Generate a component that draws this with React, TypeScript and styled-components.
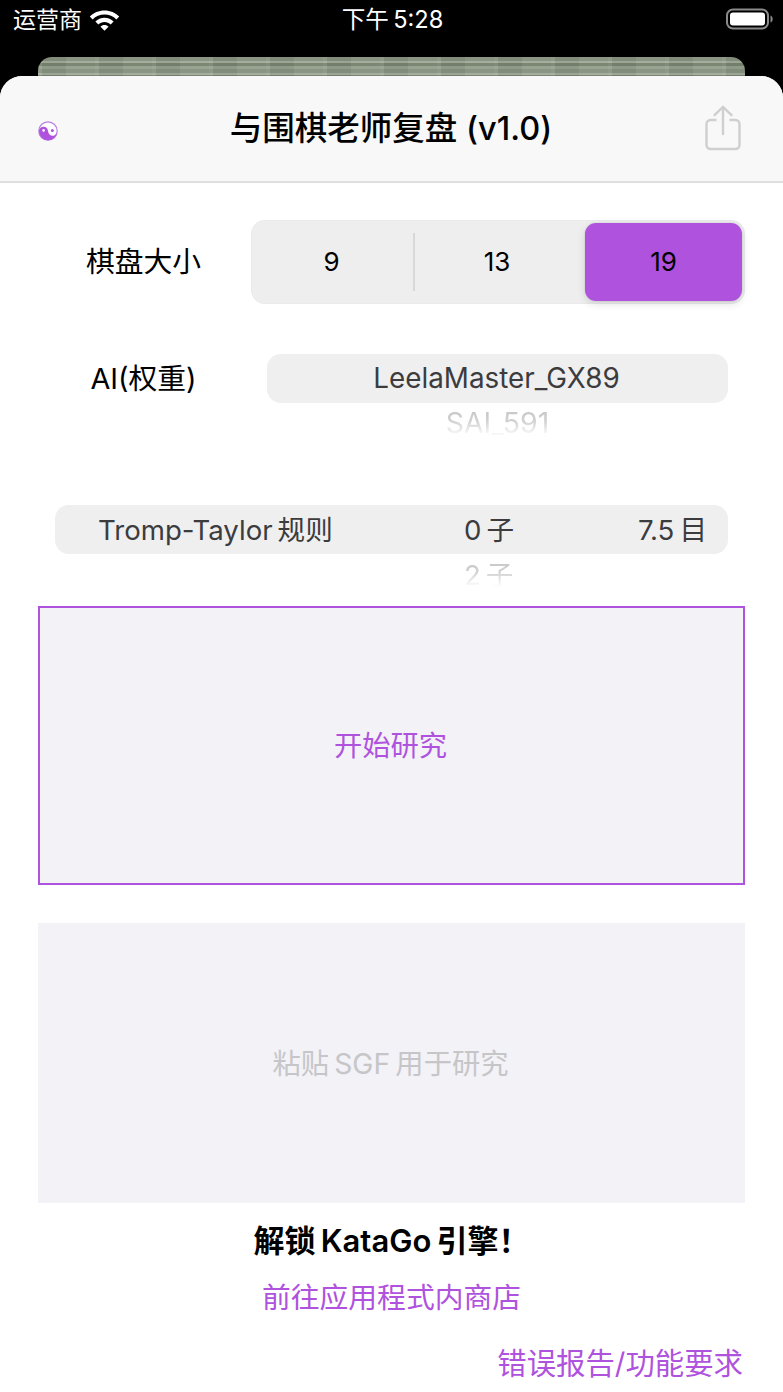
import React from "react";
import styled, { createGlobalStyle } from "styled-components";

const Global = createGlobalStyle`
  html, body { margin: 0; padding: 0; background: #000; }
  body { font-family: Inter, "Noto Sans CJK SC", sans-serif; }
  * { box-sizing: border-box; }
`;
const Screen = styled.div`
  width: 783px; height: 1392px; overflow: hidden; background: #000;
  display: flex; flex-direction: column;
`;
const StatusBar = styled.div`
  height: 57px; flex: none; display: grid; grid-template-columns: 1fr auto 1fr; align-items: start;
  padding: 7px 10px 0 13px; color: #fff; font-size: 23px; line-height: 26px; white-space: nowrap;
`;
const StatusLeft = styled.div`display: flex; align-items: center; gap: 7px;`;
const StatusTime = styled.span`font-size: 23.6px; margin-left: -1px;`;
const StatusRight = styled.div`display: flex; justify-content: flex-end; padding-top: 1px;`;
const Peek = styled.div`
  height: 19px; flex: none; margin: 0 38px; border-radius: 14px 14px 0 0;
  background:
    repeating-linear-gradient(90deg, rgba(255,255,255,.07) 0 4px, rgba(0,0,0,.04) 4px 28px, rgba(255,255,255,.03) 28px 57px),
    repeating-linear-gradient(180deg, #87927f 0 4px, #a2ab9b 4px 6px, #78836f 6px 9px, #96a08e 9px 12px);
  filter: blur(.4px);
`;
const Sheet = styled.div`
  flex: 1; background: #fff; border-radius: 22px 22px 0 0; overflow: hidden;
  display: flex; flex-direction: column; position: relative;
`;
const Header = styled.header`
  height: 107px; flex: none; background: #f8f8f8; border-bottom: 2px solid #dfdfdf;
  display: grid; grid-template-columns: 1fr auto 1fr; align-items: center; padding: 0 37px;
`;
const Title = styled.h1`
  margin: 0; font-size: 32.5px; line-height: 38px; font-weight: 500; color: #000; white-space: nowrap;
  font-family: Inter, "Noto Sans CJK SC", sans-serif; margin-left: -1px;
`;
const Yin = styled.span`display: flex; align-items: center; padding: 5px 0 0 1px;`;
const Share = styled.span`display: flex; justify-content: flex-end; padding-right: 5px; padding-bottom: 2px;`;
const Content = styled.main`
  flex: 1; display: flex; flex-direction: column; padding: 37px 38px 0;
`;
const BoardRow = styled.div`
  height: 84px; display: flex; align-items: center; justify-content: space-between;
`;
const RowLabel = styled.div`
  width: 211px; text-align: center; font-size: 28.8px; line-height: 34px; color: #000; white-space: nowrap;
`;
const Segmented = styled.div`
  width: 494px; height: 84px; background: #eeeeee; border-radius: 14px; padding: 3px;
  display: grid; grid-template-columns: 161px 170px 157px; align-items: stretch;
  box-shadow: inset 0 0 0 1px rgba(0,0,0,.015);
`;
const Segment = styled.div<{ $active?: boolean; $divider?: boolean; $shift?: boolean }>`
  display: flex; align-items: center; justify-content: center;
  font-size: 26px; color: #000; border-radius: 11px; position: relative;
  padding-right: ${p => (p.$shift ? 6 : 0)}px; padding-bottom: 2px;
  background: ${p => (p.$active ? "#af52de" : "transparent")};
  box-shadow: ${p => (p.$active ? "0 3px 8px rgba(0,0,0,.12), 0 0 0 1px rgba(0,0,0,.04)" : "none")};
  ${p => p.$divider && `&::after { content: ""; position: absolute; right: 0; top: 10px; bottom: 10px; width: 2px; background: #d8d8d8; }`}
`;
const AiRow = styled.div`
  margin-top: 50px; height: 151px; display: flex; align-items: flex-start; justify-content: space-between; padding-right: 17px;
`;
const AiLabel = styled(RowLabel)`
  height: 49px; line-height: 49px;
`;
const PickerCol = styled.div`
  width: 461px; display: flex; flex-direction: column;
`;
const PickerPill = styled.div`
  height: 49px; border-radius: 14px; background: #efeff0; display: flex; align-items: center;
  justify-content: center; font-size: 27.8px; color: #3c3c3e; white-space: nowrap; padding: 0 2px 2px 0;
`;
const FadeText = styled.div`
  height: 36px; margin-top: 2px; text-align: center; font-size: 28.4px; line-height: 36px; color: #9a9a9c;
  white-space: nowrap;
  -webkit-mask-image: linear-gradient(180deg, rgba(0,0,0,.6) 0, rgba(0,0,0,.45) 45%, transparent 88%);
  mask-image: linear-gradient(180deg, rgba(0,0,0,.6) 0, rgba(0,0,0,.45) 45%, transparent 88%);
`;
const RulesBlock = styled.div`
  margin: 0 17px; height: 101px; display: flex; flex-direction: column;
`;
const RulesPill = styled.div`
  height: 49px; flex: none; border-radius: 14px; background: #efeff0; display: grid;
  grid-template-columns: 318px 200px 1fr; align-items: center; font-size: 27.6px; color: #3c3c3e;
  padding: 0 21px 3px 43px; white-space: nowrap;
`;
const Komi = styled.span`text-align: right;`;
const Handicap = styled.span`padding-left: 48px;`;
const RulesFade = styled.div`
  display: grid; grid-template-columns: 361px 1fr;
`;
const RulesFadeText = styled(FadeText)`
  grid-column: 2; text-align: left; padding-left: 48px; height: 34px; margin-top: 3px; font-size: 27.6px;
`;
const BigButton = styled.div<{ $outlined?: boolean }>`
  height: ${p => (p.$outlined ? 279 : 280)}px; background: #f2f2f7; flex: none;
  display: flex; align-items: center; justify-content: center; font-size: 28.3px; padding: 0 2px 4px 0;
  white-space: nowrap;
  border: ${p => (p.$outlined ? "2px solid #af52de" : "none")};
  color: ${p => (p.$outlined ? "#af52de" : "#c6c6c9")};
`;
const PasteButton = styled(BigButton)`margin-top: 38px;`;
const Unlock = styled.div`
  margin-top: 18px; text-align: center; font-size: 31px; line-height: 40px; font-weight: 600; color: #000; white-space: nowrap;
`;
const StoreLink = styled.div`
  margin-top: 17px; text-align: center; font-size: 28.8px; line-height: 40px; color: #af52de; white-space: nowrap;
`;
const ReportLink = styled.div`
  margin-top: 26px; text-align: right; font-size: 29.4px; line-height: 40px; color: #af52de; padding-right: 2px; white-space: nowrap;
`;

const Wifi = () => (
  <svg width="31" height="23" viewBox="0 0 31 23" fill="none">
    <path d="M15.5 1.5C9.8 1.5 4.6 3.8.8 7.6l2.8 2.9C6.7 7.5 10.9 5.6 15.5 5.6s8.8 1.9 11.9 4.9l2.8-2.9C26.4 3.8 21.2 1.5 15.5 1.5z" fill="#fff" />
    <path d="M15.5 8.8c-3.6 0-6.8 1.4-9.1 3.7l2.9 2.9c1.6-1.6 3.8-2.5 6.2-2.5s4.6.9 6.2 2.5l2.9-2.9c-2.3-2.3-5.5-3.7-9.1-3.7z" fill="#fff" />
    <path d="M15.5 16c-1.6 0-3 .6-4 1.7l4 4.1 4-4.1c-1-1.1-2.4-1.7-4-1.7z" fill="#fff" />
  </svg>
);
const Battery = () => (
  <svg width="47" height="22" viewBox="0 0 47 22" fill="none">
    <rect x="1" y="1.5" width="41" height="19" rx="6" stroke="#8a8a8a" strokeWidth="2" />
    <rect x="4" y="4.5" width="35" height="13" rx="3" fill="#fff" />
    <path d="M44.5 7.5c1.5.5 2.2 2 2.2 3.5s-.7 3-2.2 3.5z" fill="#8a8a8a" />
  </svg>
);
const YinYang = () => (
  <svg width="20" height="20" viewBox="0 0 20 20">
    <circle cx="10" cy="10" r="9.2" fill="#fff" stroke="#b983e6" strokeWidth="1.2" />
    <path d="M1 10c0 5 4 9.2 9 9.2 5.2 0 9.2-4.2 9.2-9.2 0 2.6-2.2 4.8-4.6 4.8S10.4 12.8 10 10 8 5.8 5.4 5.8C3 5.8 1 7.5 1 10z" fill="#af52de" />
    <circle cx="5.6" cy="9.4" r="1.3" fill="#fff" />
    <circle cx="14.4" cy="9.6" r="1.5" fill="#af52de" />
  </svg>
);
const ShareIcon = () => (
  <svg width="36" height="46" viewBox="0 0 36 46" fill="none" stroke="#cfcfcf" strokeWidth="2.4">
    <path d="M18 29V2M9.5 10.2 18 1.8l8.5 8.4" strokeLinecap="round" strokeLinejoin="round" />
    <path d="M11.5 15H5.5A4 4 0 0 0 1.5 19v21a4 4 0 0 0 4 4h25a4 4 0 0 0 4-4V19a4 4 0 0 0-4-4h-6" />
  </svg>
);

export default function App() {
  return (
    <Screen>
      <Global />
      <StatusBar>
        <StatusLeft>运营商<Wifi /></StatusLeft>
        <StatusTime>下午{"\u2009"}5:28</StatusTime>
        <StatusRight><Battery /></StatusRight>
      </StatusBar>
      <Peek />
      <Sheet>
        <Header>
          <Yin><YinYang /></Yin>
          <Title>与围棋老师复盘 (v1.0)</Title>
          <Share><ShareIcon /></Share>
        </Header>
        <Content>
          <BoardRow>
            <RowLabel>棋盘大小</RowLabel>
            <Segmented>
              <Segment $divider $shift>9</Segment>
              <Segment $shift>13</Segment>
              <Segment $active>19</Segment>
            </Segmented>
          </BoardRow>
          <AiRow>
            <AiLabel>AI(权重)</AiLabel>
            <PickerCol>
              <PickerPill>LeelaMaster_GX89</PickerPill>
              <FadeText>SAI_591</FadeText>
            </PickerCol>
          </AiRow>
          <RulesBlock>
            <RulesPill>
              <span>Tromp-Taylor{"\u2009"}规则</span>
              <Handicap>0{"\u2009"}子</Handicap>
              <Komi>7.5{"\u2009"}目</Komi>
            </RulesPill>
            <RulesFade>
              <RulesFadeText>2{"\u2009"}子</RulesFadeText>
            </RulesFade>
          </RulesBlock>
          <BigButton $outlined>开始研究</BigButton>
          <PasteButton>粘贴{"\u2009"}SGF{"\u2009"}用于研究</PasteButton>
          <Unlock>解锁{"\u2009"}KataGo{"\u2009"}引擎！</Unlock>
          <StoreLink>前往应用程式内商店</StoreLink>
          <ReportLink>错误报告/功能要求</ReportLink>
        </Content>
      </Sheet>
    </Screen>
  );
}
